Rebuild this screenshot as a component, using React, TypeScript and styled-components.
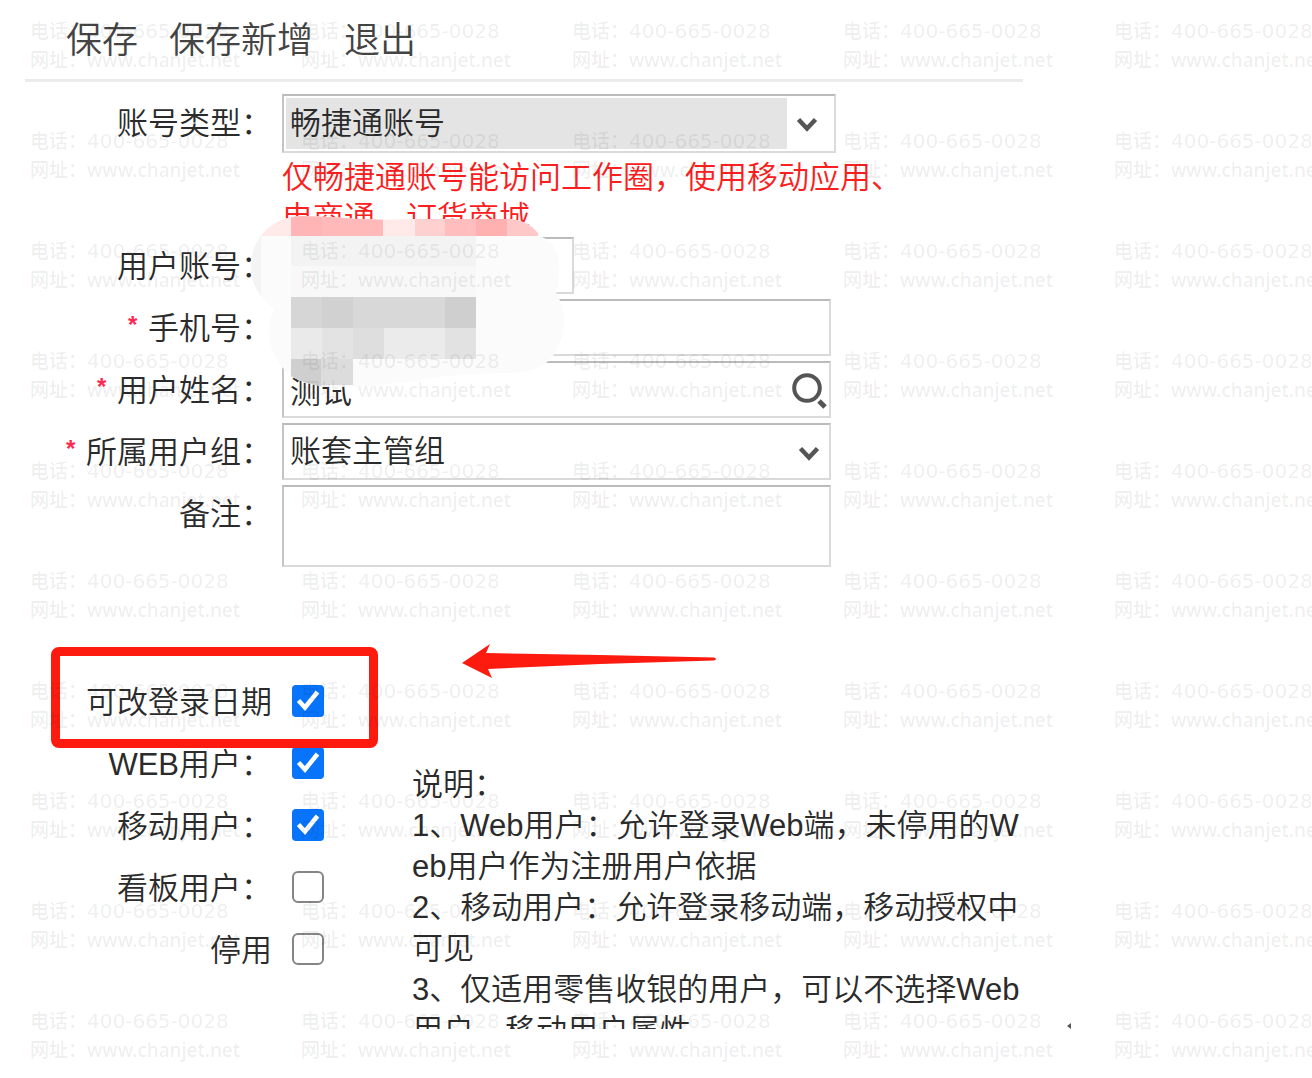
import React from "react";
import styled, { createGlobalStyle } from "styled-components";

const sans = `"Liberation Sans", "Noto Sans CJK SC", sans-serif`;

const GlobalStyle = createGlobalStyle`
  *, *::before, *::after { box-sizing: border-box; }
  body {
    margin: 0;
    background: #fff;
    color: #2b2b2b;
    font-family: ${sans};
    font-size: 31px;
    font-weight: 350;
  }
`;

const Page = styled.div`
  position: relative;
  min-height: 100vh;
  overflow: hidden;
`;

const Sheet = styled.main`
  position: relative;
  max-width: 998px;
  margin-left: 25px;
`;

const Toolbar = styled.nav`
  display: flex;
  align-items: center;
  gap: 31px;
  height: 82px;
  padding: 2px 0 0 41px;
  border-bottom: 3px solid #ebebeb;
`;

const ToolButton = styled.button`
  padding: 0;
  border: 0;
  background: none;
  color: #444;
  font: inherit;
  font-size: 36px;
  line-height: 54px;
  cursor: pointer;
`;

const Fields = styled.form`
  display: flex;
  flex-direction: column;
  gap: 5px;
  padding-top: 12px;
`;

const Row = styled.div`
  display: grid;
  grid-template-columns: 247px minmax(0, 1fr);
  column-gap: 10px;
  align-items: start;
`;

const Label = styled.label`
  height: 57px;
  text-align: right;
  line-height: 59px;
  white-space: nowrap;
`;

const Star = styled.span`
  padding-right: 2px;
  color: #ff2850;
  font-size: 24px;
  font-weight: 700;
  line-height: 1;
  vertical-align: 6px;
`;

const Box = styled.div<{ $width: number; $height?: number }>`
  position: relative;
  display: flex;
  max-width: ${(p) => p.$width}px;
  height: ${(p) => p.$height ?? 57}px;
  padding: 2px;
  border: 2px solid #dadada;
  border-top-color: #bbb;
  border-left-color: #c4c4c4;
`;

const control = `
  width: 100%;
  height: 100%;
  margin: 0;
  padding: 0 4px;
  border: 0;
  border-radius: 0;
  outline: 0;
  background: none;
  color: #2b2b2b;
  font: inherit;
`;

const TextInput = styled.input`
  ${control}
`;

const TextArea = styled.textarea`
  ${control}
  resize: none;
`;

const Select = styled.select<{ $filled?: boolean }>`
  ${control}
  appearance: none;
  ${(p) =>
    p.$filled &&
    `background: linear-gradient(#e4e4e4, #e4e4e4) no-repeat 0 0 / calc(100% - 45px) 100%;`}
`;

const Chevron = styled.svg`
  position: absolute;
  right: 8px;
  top: 50%;
  width: 24px;
  height: 18px;
  margin-top: -7px;
  pointer-events: none;
`;

const FilledChevron = styled(Chevron)`
  right: 15px;
  margin-top: -8px;
`;

const SearchButton = styled.button`
  flex: none;
  width: 38px;
  padding: 0;
  border: 0;
  background: none;
  cursor: pointer;
`;

const Hint = styled.p`
  max-width: 640px;
  margin: 5px 0 -6px;
  color: #fb2020;
  line-height: 40px;
`;

const Options = styled.section`
  display: flex;
  align-items: flex-start;
  margin-top: 103px;
`;

const Checks = styled.div`
  flex: none;
  width: 387px;
`;

const CheckRow = styled.div`
  position: relative;
  display: grid;
  grid-template-columns: 247px auto;
  column-gap: 20px;
  align-items: center;
  justify-content: start;
  height: 62px;
`;

const CheckLabel = styled.label`
  padding-top: 3px;
  text-align: right;
  line-height: 59px;
  white-space: nowrap;
`;

const Check = styled.input`
  appearance: none;
  width: 32px;
  height: 32px;
  margin: 0;
  border: 2px solid #858585;
  border-radius: 6px;
  background: #fff;

  &:checked {
    border: 0;
    border-radius: 4px;
    background: #0874fb;
  }
`;

const Tick = styled.svg`
  position: absolute;
  left: 267px;
  top: 15px;
  width: 32px;
  height: 32px;
  pointer-events: none;
`;

const Highlight = styled.span`
  position: absolute;
  left: 26px;
  top: -23px;
  z-index: 1;
  width: 327px;
  height: 101px;
  border: 9px solid #fd1b10;
  border-radius: 8px;
  pointer-events: none;
`;

const Arrow = styled.svg`
  position: absolute;
  left: 436px;
  top: -27px;
  width: 258px;
  height: 38px;
`;

const Notes = styled.div`
  flex: 1;
  min-width: 0;
  max-height: 265px;
  margin-top: 94px;
  overflow: hidden;
  line-height: 41px;
  word-break: break-all;

  p {
    margin: 0;
  }
`;

const Mosaic = styled.svg`
  position: absolute;
  left: 225px;
  top: 214px;
  width: 318px;
  height: 176px;
  pointer-events: none;
`;

const Corner = styled.svg`
  position: absolute;
  left: 1041px;
  top: 1022px;
  width: 6px;
  height: 8px;
`;

const Watermarks = styled.div`
  position: absolute;
  inset: 0;
  z-index: 2;
  display: grid;
  grid-template-columns: repeat(5, 271px);
  grid-auto-rows: 110px;
  padding: 17px 0 0 30px;
  overflow: hidden;
  color: rgba(0, 0, 0, 0.08);
  font-family: "Noto Sans", "Noto Sans CJK SC", sans-serif;
  font-size: 19px;
  font-weight: 500;
  line-height: 29px;
  white-space: nowrap;
  pointer-events: none;
`;

const Line = styled.div`
  height: 29px;
`;

const Digits = styled.span`
  font-family: "DejaVu Sans", sans-serif;
  font-size: 20px;
`;

const chevronLine = (
  <path d="M3.5 3.5 L12 12.5 L20.5 3.5" fill="none" stroke="#555" strokeWidth="4.5" />
);

const checks = [
  { id: "date", label: "可改登录日期", on: true, marked: true },
  { id: "web", label: "WEB用户：", on: true },
  { id: "mobile", label: "移动用户：", on: true },
  { id: "board", label: "看板用户：", on: false },
  { id: "disabled", label: "停用", on: false },
];

// x, y, width, height, colour of each mosaic block
const blocks: [number, number, number, number, string][] = [
  [250, 214, 288, 22, "#ffe9e9"],
  [291, 214, 31, 22, "#ffb5b5"],
  [322, 214, 61, 22, "#ffb9b9"],
  [415, 214, 30, 22, "#ffd0d0"],
  [445, 214, 31, 22, "#ffbdbd"],
  [476, 214, 31, 22, "#ffb0b0"],
  [507, 214, 31, 22, "#ffc8c8"],
  [250, 236, 11, 61, "#f4f4f4"],
  [291, 236, 185, 30, "#f3f3f3"],
  [291, 266, 185, 31, "#f8f8f8"],
  [291, 297, 31, 31, "#d6d6d6"],
  [322, 297, 31, 31, "#d1d1d1"],
  [353, 297, 92, 31, "#d8d8d8"],
  [445, 297, 31, 31, "#cfcfcf"],
  [291, 328, 31, 31, "#eaeaea"],
  [322, 328, 31, 31, "#e3e3e3"],
  [353, 328, 31, 31, "#dedede"],
  [384, 328, 61, 31, "#ebebeb"],
  [445, 328, 31, 31, "#e2e2e2"],
  [291, 359, 30, 30, "#cfcfcf"],
  [321, 359, 32, 26, "#dcdcdc"],
];

export default function App() {
  return (
    <Page>
      <GlobalStyle />
      <Sheet>
        <Toolbar>
          <ToolButton type="button">保存</ToolButton>
          <ToolButton type="button">保存新增</ToolButton>
          <ToolButton type="button">退出</ToolButton>
        </Toolbar>

        <Fields>
          <Row>
            <Label htmlFor="type">账号类型：</Label>
            <div>
              <Box $width={554} $height={59}>
                <Select id="type" $filled>
                  <option>畅捷通账号</option>
                </Select>
                <FilledChevron viewBox="0 0 24 18">{chevronLine}</FilledChevron>
              </Box>
              <Hint>仅畅捷通账号能访问工作圈，使用移动应用、电商通、订货商城</Hint>
            </div>
          </Row>
          <Row>
            <Label htmlFor="account">用户账号：</Label>
            <Box $width={292}>
              <TextInput id="account" />
            </Box>
          </Row>
          <Row>
            <Label htmlFor="phone">
              <Star>*</Star> 手机号：
            </Label>
            <Box $width={549}>
              <TextInput id="phone" />
            </Box>
          </Row>
          <Row>
            <Label htmlFor="name">
              <Star>*</Star> 用户姓名：
            </Label>
            <Box $width={549}>
              <TextInput id="name" defaultValue="测试" />
              <SearchButton type="button" aria-label="搜索">
                <svg width="38" height="44" viewBox="0 0 38 44">
                  <circle cx="18" cy="22" r="12.8" fill="none" stroke="#555" strokeWidth="4" />
                  <path d="M30 35 L36 41" stroke="#555" strokeWidth="5" />
                </svg>
              </SearchButton>
            </Box>
          </Row>
          <Row>
            <Label htmlFor="group">
              <Star>*</Star> 所属用户组：
            </Label>
            <Box $width={549}>
              <Select id="group">
                <option>账套主管组</option>
              </Select>
              <Chevron viewBox="0 0 24 18">{chevronLine}</Chevron>
            </Box>
          </Row>
          <Row>
            <Label htmlFor="remark">备注：</Label>
            <Box $width={549} $height={82}>
              <TextArea id="remark" />
            </Box>
          </Row>
        </Fields>

        <Options>
          <Checks>
            {checks.map((c) => (
              <CheckRow key={c.id}>
                <CheckLabel htmlFor={c.id}>{c.label}</CheckLabel>
                <Check type="checkbox" id={c.id} defaultChecked={c.on} />
                {c.on && (
                  <Tick viewBox="0 0 32 32">
                    <path d="M6.5 15.5 L13 22.5 L25.5 7" fill="none" stroke="#fff" strokeWidth="4.5" />
                  </Tick>
                )}
                {c.marked && (
                  <>
                    <Highlight />
                    <Arrow viewBox="461 642 258 38">
                      <path
                        d="M462 662 L490 643 L486 652 L600 654 L714 656.5 Q718 658 714 659.5 L600 663 L488 668 L492 677 Z"
                        fill="#fd1b10"
                      />
                    </Arrow>
                  </>
                )}
              </CheckRow>
            ))}
          </Checks>
          <Notes>
            <p>说明：</p>
            <p>1、Web用户：允许登录Web端，未停用的Web用户作为注册用户依据</p>
            <p>2、移动用户：允许登录移动端，移动授权中可见</p>
            <p>3、仅适用零售收银的用户，可以不选择Web用户、移动用户属性</p>
          </Notes>
        </Options>

        <Mosaic viewBox="250 214 318 176" aria-hidden="true">
          <defs>
            <clipPath id="cloud">
              <path d="M261 236 Q275 217 302 216 L330 217 Q370 221 410 219 L510 219 Q530 221 540 236 Q559 243 559 268 Q559 285 556 294 Q565 306 564 324 Q562 350 546 363 Q533 373 505 373 Q460 373 425 379 Q385 386 340 387 Q313 388 292 377 Q269 358 269 330 Q269 318 274 309 Q251 292 251 266 Q251 248 261 236 Z" />
            </clipPath>
          </defs>
          <g clipPath="url(#cloud)">
            <rect x="250" y="214" width="318" height="176" fill="#fbfbfb" />
            {blocks.map(([x, y, w, h, fill]) => (
              <rect key={`${x}-${y}-${w}`} x={x} y={y} width={w} height={h} fill={fill} />
            ))}
          </g>
        </Mosaic>

        <Corner viewBox="0 0 6 8" aria-hidden="true">
          <path d="M1 4 L5 1 V7 Z" fill="#555" />
        </Corner>
      </Sheet>

      <Watermarks aria-hidden="true">
        {Array.from({ length: 50 }, (_, i) => (
          <div key={i}>
            <Line>
              电话：<Digits>400-665-0028</Digits>
            </Line>
            <Line>网址：www.chanjet.net</Line>
          </div>
        ))}
      </Watermarks>
    </Page>
  );
}
